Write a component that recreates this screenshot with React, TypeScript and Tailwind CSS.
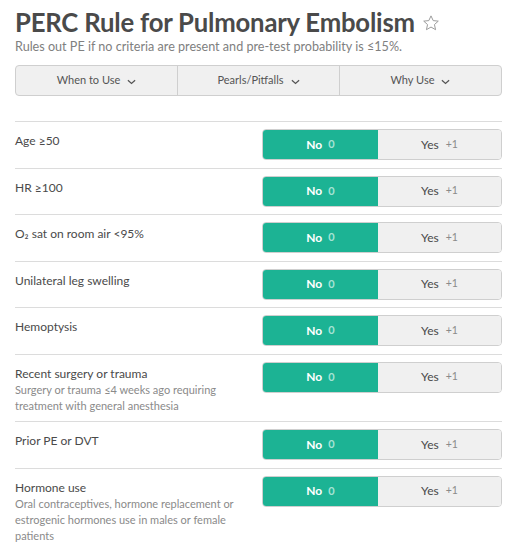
const criteria = [
  { label: "Age ≥50" },
  { label: "HR ≥100" },
  { label: "O₂ sat on room air <95%" },
  { label: "Unilateral leg swelling" },
  { label: "Hemoptysis" },
  {
    label: "Recent surgery or trauma",
    note: "Surgery or trauma ≤4 weeks ago requiring treatment with general anesthesia",
  },
  { label: "Prior PE or DVT" },
  {
    label: "Hormone use",
    note: "Oral contraceptives, hormone replacement or estrogenic hormones use in males or female patients",
  },
];

const tabs = ["When to Use", "Pearls/Pitfalls", "Why Use"];

const Chevron = () => (
  <svg width="9" height="6" viewBox="0 0 10 6" className="ml-[7px] mt-[2px]">
    <path d="M1 1l4 3.5L9 1" fill="none" stroke="#555" strokeWidth="1.4" />
  </svg>
);

export default function App() {
  return (
    <div className="w-[515px] h-[545px] overflow-hidden bg-white font-['Lato',sans-serif]">
      <div className="ml-[15px] w-[487px]">
        {/* Header */}
        <div className="flex items-center pt-[7px]">
          <h1 className="text-[25.7px] leading-[30px] font-bold text-[#4a4a4a] tracking-[-0.2px]">
            PERC Rule for Pulmonary Embolism
          </h1>
          <svg width="18" height="18" viewBox="0 0 24 24" className="ml-[7px] mt-[1px]">
            <path
              d="M12 2.5l2.9 6.3 6.8.7-5.1 4.6 1.5 6.8L12 17.4l-6.1 3.5 1.5-6.8-5.1-4.6 6.8-.7z"
              fill="none"
              stroke="#999"
              strokeWidth="1.3"
              strokeLinejoin="round"
            />
          </svg>
        </div>
        <p className="text-[12.6px] leading-[16px] text-[#808080] mt-[2px]">
          Rules out PE if no criteria are present and pre-test probability is ≤15%.
        </p>

        {/* Tabs */}
        <div className="mt-[10px] flex h-[31px] rounded-[4px] border border-[#cfcfcf] bg-[#f0f0f0]">
          {tabs.map((t, i) => (
            <div
              key={t}
              className={`flex flex-1 items-center justify-center text-[11px] text-[#555] ${
                i > 0 ? "border-l border-[#cfcfcf]" : ""
              }`}
            >
              {t}
              <Chevron />
            </div>
          ))}
        </div>

        {/* Criteria */}
        <div className="mt-[25px] border-t border-[#dcdcdc]">
          {criteria.map((c) => (
            <div key={c.label} className="flex border-b border-[#dcdcdc] pt-[7px] pb-[7.5px]">
              <div className="w-[247px] pr-[12px] pt-[4px]">
                <div className="text-[12px] leading-[16px] text-[#4a4a4a]">{c.label}</div>
                {c.note && (
                  <div className="text-[11px] leading-[16px] text-[#8a8a8a]">{c.note}</div>
                )}
              </div>
              <div className="flex h-[31px] w-[240px] self-start overflow-hidden rounded-[4px] border border-[#cfcfcf]">
                <div className="flex w-[115px] items-center justify-center bg-[#1cb394]">
                  <span className="text-[12px] font-bold text-white">No</span>
                  <span className="ml-[6px] text-[11px] font-bold text-[#a6e3d4]">0</span>
                </div>
                <div className="flex flex-1 items-center justify-center bg-[#f0f0f0]">
                  <span className="text-[12px] text-[#4a4a4a]">Yes</span>
                  <span className="ml-[7px] text-[10.5px] text-[#8a8a8a]">+1</span>
                </div>
              </div>
            </div>
          ))}
        </div>
      </div>
    </div>
  );
}
